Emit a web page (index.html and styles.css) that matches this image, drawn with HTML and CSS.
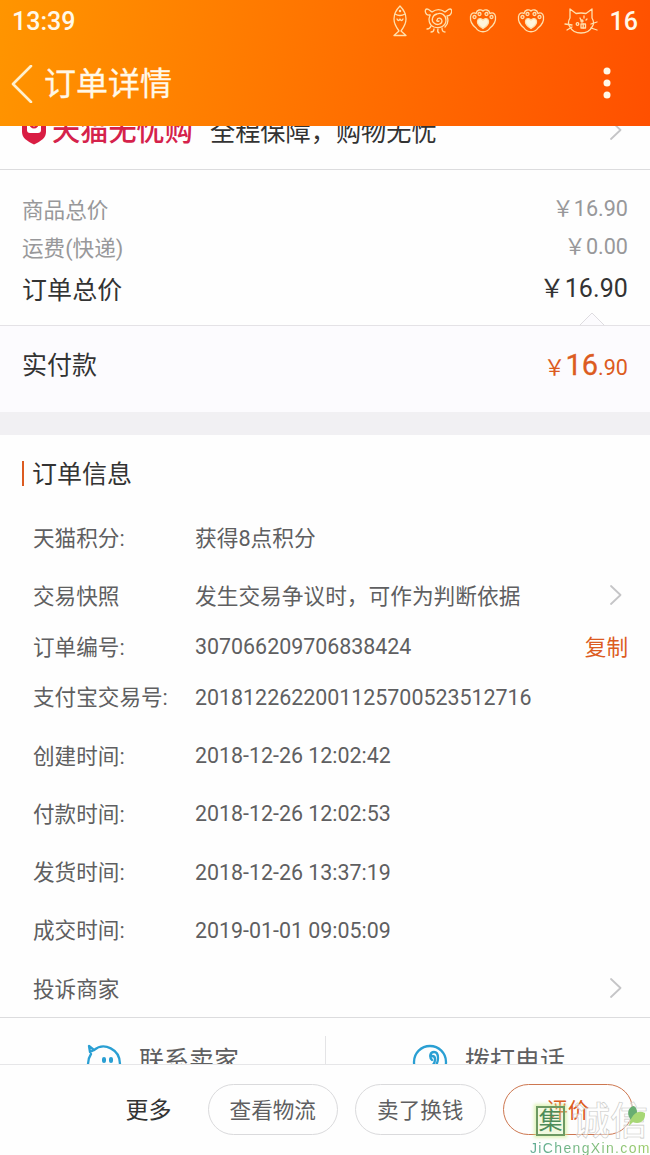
FILE: index.html
```html
<!DOCTYPE html>
<html lang="zh-CN">
  <head>
    <meta charset="utf-8">
    <meta name="viewport" content="width=device-width,initial-scale=1">
    <title>订单详情</title>
    <link rel="stylesheet" href="styles.css">
  </head>

  <body>
    <!-- shared icons -->
    <svg class="sprite" width="0" height="0">
      <symbol id="chevron" viewBox="0 0 12 20">
        <path d="M1 1l9.500 9-9.500 9"/>
      </symbol>
      <symbol id="paw" viewBox="0 0 28 26">
        <path d="M7 20C3 17 1 13 1.500 8.500 2 5 5 4 7 5.500 8 1.500 12 1 14 3c2-2 6-1.500 7 2.500 2-1.500 5-.5 5.500 3C27 13 25 17 21 20c-3 5-11 5-14 0z"/>
        <circle cx="5.500" cy="9" r="1.500"/>
        <circle cx="10.500" cy="6" r="1.500"/>
        <circle cx="17.500" cy="6" r="1.500"/>
        <circle cx="22.500" cy="9" r="1.500"/>
        <path class="solid" d="M14 20.500C10 18 8 16 8.500 13c.5-3 4-3 5.500-.8 1.500-2.200 5-2.200 5.500.8.500 3-1.500 5-5.500 7.500z"/>
      </symbol>
    </svg>

    <header class="header">
      <div class="status">
        <span class="clock">13:39</span>
        <svg class="fish" viewBox="0 0 16 32" width="16" height="32">
          <path d="M8 1C4 5 2 9 2 14c0 5 2 8 5 12l-5 4.500h12L9 26c3-4 5-7 5-12 0-5-2-9-6-13z"/>
          <path d="M3 9q5 3 10 0M5 14q1.500 3 3 0 1.500 3 3 0"/>
          <circle cx="8" cy="6" r=".6"/>
        </svg>
        <svg class="curl" viewBox="0 0 28 28" width="28" height="28">
          <path d="M6 8C1 9 0 2 3 2c2 0 3 2 5 3 4-3 9-3 13 0 2-1 3-3 5-3 3 0 2 7-3 7 2 5 1 8-2 11"/>
          <path d="M6 8c-2 5-1 10 4 12 6 2 12-1 12-7 0-5-5-8-9-6-5 1-6 7-3 9 3 3 8 1 8-2 0-3-4-4-5-1-1 1 1 2 2 1"/>
          <path d="M7 19q-1 3-4 3M10 22q0 3-3 3M14 22q-1 3 1 4M18 21q0 4 3 4"/>
        </svg>
        <svg class="paw" width="28" height="26"><use href="#paw"/></svg>
        <svg class="paw" width="28" height="26"><use href="#paw"/></svg>
        <svg class="cat" viewBox="0 0 36 28" width="36" height="28">
          <path d="M7 11L7 2l6 4.500q5-1 10 0L29 2v9q3 5 0 9-3 6-11 6T7 20q-3-4 0-9z"/>
          <path d="M2 17l7 1M4 23l5-3M28 17l6-2M28 21l6 2M17 11l1 2M21 9v2M24 12l-1 1"/>
          <circle cx="14.500" cy="17" r="1.300"/>
          <circle cx="19" cy="14" r="1"/>
          <rect x="18" y="17" width="4.500" height="4"/>
          <path d="M20.200 17v4"/>
        </svg>
        <span class="battery">16</span>
      </div>
      <div class="nav">
        <svg class="back" viewBox="0 0 22 38" width="22" height="38"><path d="M20 1L2 19l18 18"/></svg>
        <h1 class="title">订单详情</h1>
        <svg class="menu" viewBox="0 0 8 32" width="8" height="32">
          <circle cx="4" cy="4" r="3.500"/>
          <circle cx="4" cy="16" r="3.500"/>
          <circle cx="4" cy="28" r="3.500"/>
        </svg>
      </div>
    </header>

    <section class="promo">
      <svg class="shield" viewBox="0 0 24 30" width="24" height="30">
        <path class="shield-body" d="M0 3q12-4 24 0v14c0 6-5 9-12 12.500C5 26 0 23 0 17z"/>
        <path class="shield-mark" d="M5 6h14v9q0 3-3 3H8q-3 0-3-3z"/>
        <path class="shield-smile" d="M9 11q3 3 6 0"/>
      </svg>
      <b class="promo-name">天猫无忧购</b>
      <span class="promo-text">全程保障，购物无忧</span>
      <svg class="chevron" width="12" height="20"><use href="#chevron"/></svg>
    </section>

    <section class="totals">
      <div class="line"><span class="name">商品总价</span><span>￥16.90</span></div>
      <div class="line"><span class="name">运费(快递)</span><span>￥0.00</span></div>
      <div class="line total"><span class="name">订单总价</span><span>￥16.90</span></div>
      <svg class="notch" viewBox="0 0 26 14" width="26" height="14"><path d="M1 13L13 1l12 12"/></svg>
    </section>

    <section class="paid">
      <span>实付款</span>
      <span class="price">￥<b>16</b>.90</span>
    </section>

    <section class="info">
      <h2 class="info-title">订单信息</h2>
      <div class="row"><span class="label">天猫积分:</span><span class="text">获得8点积分</span></div>
      <div class="row">
        <span class="label">交易快照</span><span class="text">发生交易争议时，可作为判断依据</span>
        <svg class="chevron" width="12" height="20"><use href="#chevron"/></svg>
      </div>
      <div class="row order-no"><span class="label">订单编号:</span><span class="num">307066209706838424</span><a class="copy">复制</a></div>
      <div class="row"><span class="label">支付宝交易号:</span><span class="num">2018122622001125700523512716</span></div>
      <div class="row"><span class="label">创建时间:</span><span class="num">2018-12-26 12:02:42</span></div>
      <div class="row"><span class="label">付款时间:</span><span class="num">2018-12-26 12:02:53</span></div>
      <div class="row"><span class="label">发货时间:</span><span class="num">2018-12-26 13:37:19</span></div>
      <div class="row"><span class="label">成交时间:</span><span class="num">2019-01-01 09:05:09</span></div>
      <div class="row">
        <span class="label">投诉商家</span>
        <svg class="chevron" width="12" height="20"><use href="#chevron"/></svg>
      </div>
    </section>

    <section class="contact">
      <div class="contact-item">
        <svg class="contact-icon" viewBox="0 0 36 36" width="36" height="36">
          <path d="M2 20C2 16 3 13 5 10M8 6L3 2l1 6 4-2c10-8 26-1 26 14 0 9-7 15-16 15S2 29 2 20"/>
          <path class="eyes" d="M18 15v2M25 15v2"/>
        </svg>
        <span>联系卖家</span>
      </div>
      <div class="contact-item">
        <svg class="contact-icon" viewBox="0 0 36 36" width="36" height="36">
          <circle cx="18" cy="18" r="16"/>
          <path d="M20 16c-3-3-2-8 2-8 3 0 4 3 4 6 0 7-4 11-10 14-5 1-6-5-2-6l4 1c4-2 5-4 5-8 0-2-1-3-3-3"/>
        </svg>
        <span>拨打电话</span>
      </div>
    </section>

    <footer class="actions">
      <span class="more">更多</span>
      <a class="btn">查看物流</a>
      <a class="btn">卖了换钱</a>
      <a class="btn primary">评价</a>
      <div class="watermark">
        <div class="mark-top">
          <span class="mark-box">集</span>
          <span class="mark-name">诚信</span>
          <svg class="leaf" viewBox="0 0 18 20" width="18" height="20">
            <path class="leaf-dark" d="M3 14C-2 8 0 1 6 0c4 3 5 10-3 14z"/>
            <path class="leaf-light" d="M2 15C6 6 11 4 17 7c1 8-6 12-12 9l-4 4z"/>
          </svg>
        </div>
        <div class="mark-url">JiChengXin.com</div>
      </div>
    </footer>
  </body>
</html>
```
FILE: styles.css
```css
/* general */
* { box-sizing: border-box; }
body {
  display: flex;
  flex-direction: column;
  height: 1155px;
  margin: 0;
  overflow: hidden;
  background: #fefefe;
  color: #5f5f61;
  font: 21.6px/32px Roboto, "Noto Sans CJK SC", sans-serif;
}
h1, h2 { margin: 0; font-weight: 400; }
section, header, footer { flex-shrink: 0; }
svg { flex-shrink: 0; fill: none; stroke-linecap: round; stroke-linejoin: round; }
.sprite { position: absolute; }
.chevron { margin-left: auto; stroke: #c5c5c7; stroke-width: 1.8; }

/* header */
.header {
  height: 126px;
  background: linear-gradient(100deg, #ff9500, #ff5000);
  color: #fff8e8;
}
.status { display: flex; align-items: center; height: 41px; padding: 0 12px 0 12px; }
.status svg { stroke: #ffe0ad; stroke-width: 1.3; }
.clock, .battery { padding-top: 2px; font-size: 25px; font-weight: 500; }
.clock { margin-right: auto; }
.fish { margin-right: 16px; }
.curl { margin-right: 17px; }
.paw { margin-right: 20px; }
.solid { fill: #fff5dc; }
.cat { margin: 0 11px 0 -2px; }
.nav { display: flex; align-items: center; height: 85px; padding: 0 39px 0 11px; }
.back { stroke: #fff0cd; stroke-width: 2.6; }
.title { margin: 1px auto 0 11px; font-size: 32px; line-height: 40px; -webkit-text-stroke: .3px; }
.menu { margin-bottom: 2px; fill: #fff8e8; }

/* tmall guarantee, scrolled half under the header */
.promo {
  display: flex;
  align-items: center;
  height: 44px;
  padding: 0 28px 33px 22px;
  overflow: hidden;
  border-bottom: 1px solid #dcdcde;
  color: #333;
  font-size: 25px;
}
.promo .shield { margin-bottom: 3px; }
.promo .chevron { margin-bottom: 2px; }
.shield-body { fill: #d91d43; }
.shield-mark { fill: #fff; }
.shield-smile { stroke: #d91d43; stroke-width: 2; }
.promo-name { margin: 1px 17px 0 6px; color: #d5224b; font-size: 28.200px; font-weight: 500; }
.promo-text { padding-top: 4px; font-size: 25.200px; }

/* prices */
.totals { position: relative; height: 156px; padding: 20px 22px 0; border-bottom: 1px solid #e4e2e6; }
.line { display: flex; justify-content: space-between; align-items: center; height: 38px; color: #98989a; }
.name { padding-top: 4px; }
.total { height: 44px; color: #333; font-size: 25px; letter-spacing: .1px; }
.total span { padding-top: 1px; }
.total .name { padding-top: 5px; }
.notch { position: absolute; right: 45px; bottom: -1px; fill: #fcfbfe; stroke: #dedce0; }
.paid {
  display: flex;
  justify-content: space-between;
  align-items: center;
  height: 109px;
  padding: 0 22px 6px;
  border-bottom: 23px solid #f1f0f3;
  background: #fcfbfe;
  color: #333;
  font-size: 25px;
}
.price { color: #dc5b21; font-size: 21.6px; }
.price b { font-size: 29px; font-weight: 400; -webkit-text-stroke: .3px; }

/* order info */
.info { height: 582px; padding: 26px 28px 0 33px; }
.info-title {
  height: 25px;
  margin: 0 0 22px -11px;
  padding-left: 8px;
  border-left: 2.5px solid #dc5b21;
  color: #333;
  font-size: 25px;
  line-height: 28px;
}
.row { display: flex; align-items: center; height: 58.3px; }
.order-no { height: 43px; }
.label { width: 162px; padding-top: 3px; white-space: nowrap; }
.text { padding-top: 4px; font-size: 21.700px; }
.num { padding-top: 2px; font-size: 21.400px; }
.copy { margin: 0 -6px 0 auto; padding-top: 3px; color: #dc5b21; }

/* contact row, cut off by the action bar */
.contact { display: grid; grid-template-columns: 1fr 1fr; height: 47px; overflow: hidden; border-top: 1px solid #dcdcde; }
.contact-item { display: flex; align-items: center; height: 80px; padding-left: 86px; font-size: 25px; }
.contact-item span { padding-top: 5px; }
.contact-item + .contact-item { margin-top: 18px; height: 62px; padding: 0 0 18px 86px; border-left: 1px solid #e4e4e6; }
.contact-icon { margin: 8px 17px 0 0; stroke: #2a9fd3; stroke-width: 2.3; }
.contact-icon .eyes { stroke-width: 4; }

/* action bar */
.actions {
  display: flex;
  position: relative;
  align-items: center;
  justify-content: flex-end;
  gap: 17px;
  flex: 1;
  padding: 0 17px 1px 0;
  border-top: 1px solid #e6e6e8;
}
.more { margin-right: 19px; padding-top: 3px; color: #333; font-size: 23px; }
.btn {
  width: 130.500px;
  height: 51px;
  border: 1px solid #dadadc;
  border-radius: 26px;
  line-height: 51px;
  text-align: center;
}
.primary { border-color: #cd7750; color: #dc5b21; }

/* watermark */
.watermark { position: absolute; right: 0; bottom: -2px; width: 120px; }
.mark-top { display: flex; align-items: center; gap: 7px; height: 36px; padding-left: 6px; }
.mark-box {
  flex-shrink: 0;
  width: 29px;
  height: 30px;
  border: 2px solid #6d9a62;
  box-shadow: 0 0 3px 2px #cfed9199;
  background: #d7f1a255;
  color: #4d8c59;
  font-size: 24px;
  line-height: 27px;
  text-align: center;
}
.mark-name { color: #ffffff80; font-size: 38px; font-weight: 500; white-space: nowrap; -webkit-text-stroke: .6px #c8c8c5; }
.leaf { position: absolute; right: 4px; top: 3px; }
.leaf-dark { fill: #68ad72; }
.leaf-light { fill: #a7d775; }
.mark-url {
  background: linear-gradient(90deg, #5caa93, #9bcc68);
  background-clip: text;
  -webkit-background-clip: text;
  color: transparent;
  font: 14px/18px "Liberation Sans", sans-serif;
  letter-spacing: 1.350px;
}
```
